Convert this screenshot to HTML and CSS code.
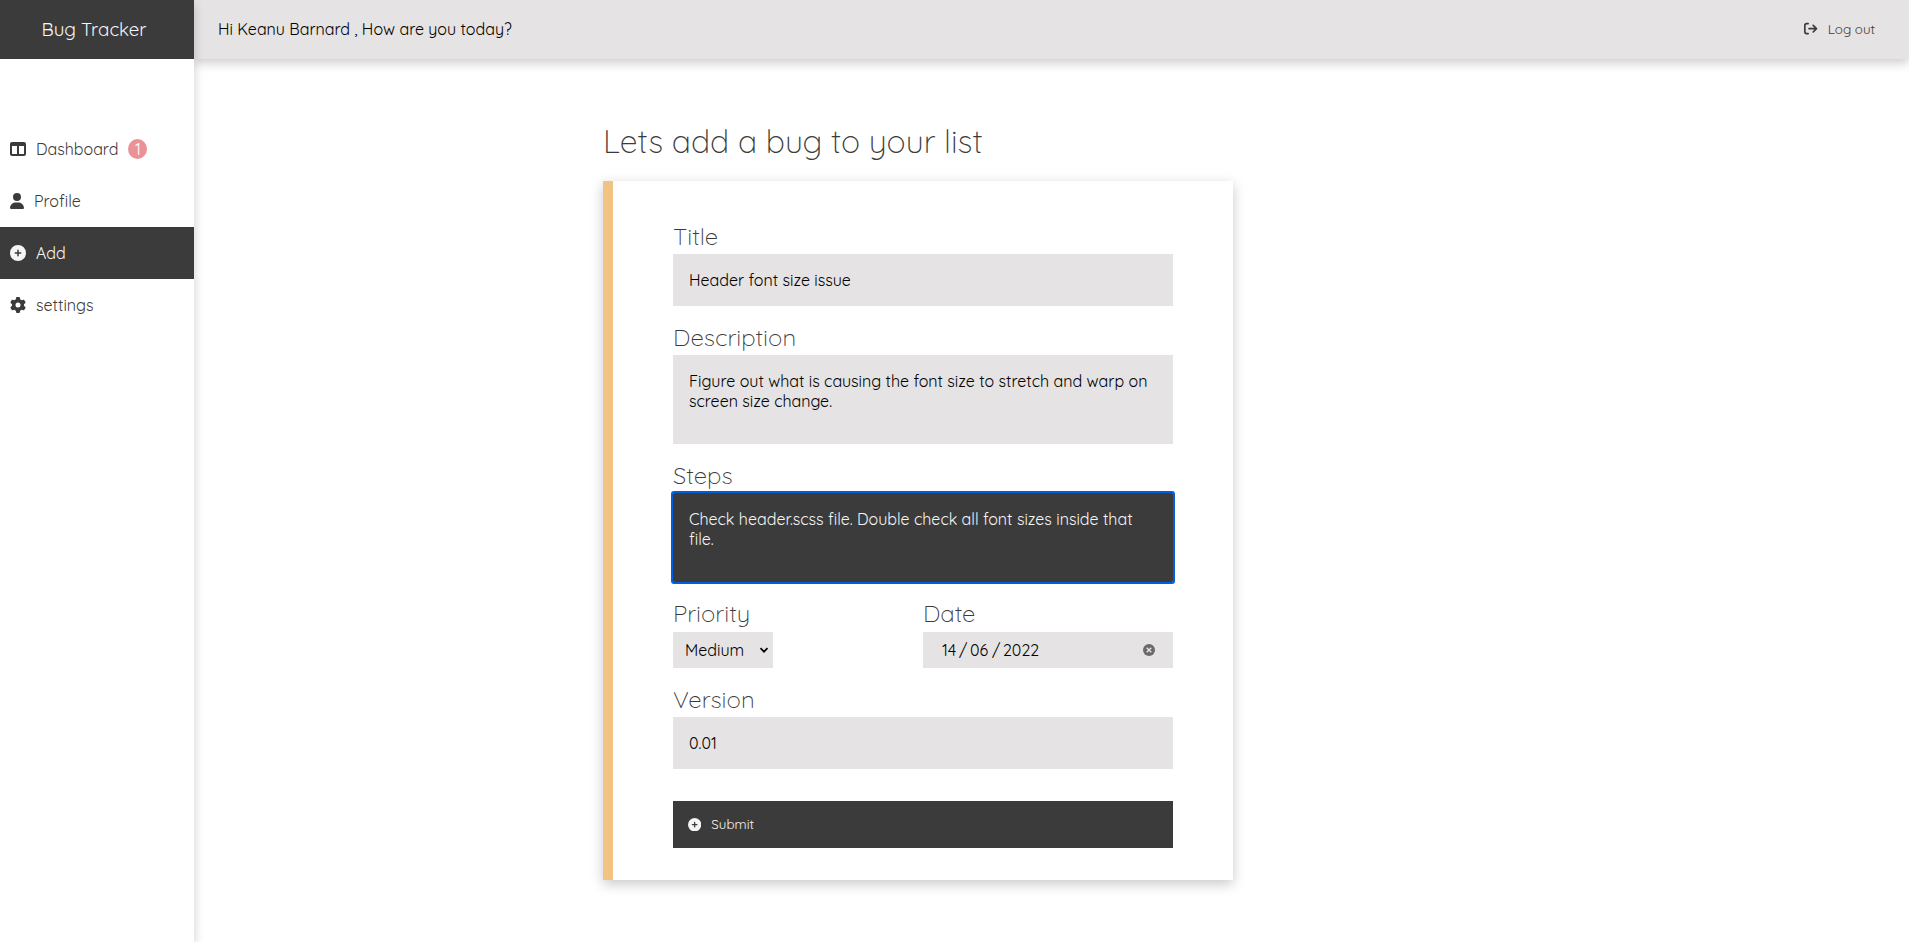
FILE: index.html
```html
<!DOCTYPE html>
<html lang="en">
<head>
<meta charset="utf-8">
<title>Bug Tracker</title>
<link rel="stylesheet" href="styles.css">
</head>
<body>
<div class="app">
  <aside class="sidebar">
    <div class="brand">Bug Tracker</div>
    <nav class="nav">
      <a class="nav-item">
        <svg class="icon" viewBox="0 0 512 512"><path d="M0 96C0 60.700 28.700 32 64 32H448c35.300 0 64 28.700 64 64V416c0 35.300-28.700 64-64 64H64c-35.300 0-64-28.700-64-64V96zm64 64V416H224V160H64zm384 0H288V416H448V160z"/></svg>
        <span>Dashboard</span><span class="badge">1</span>
      </a>
      <a class="nav-item">
        <svg class="icon icon-user" viewBox="0 0 448 512"><path d="M224 256A128 128 0 1 0 224 0a128 128 0 1 0 0 256zm-45.700 48C79.800 304 0 383.800 0 482.300C0 498.700 13.300 512 29.700 512H418.300c16.400 0 29.700-13.300 29.700-29.700C448 383.800 368.200 304 269.700 304H178.300z"/></svg>
        <span>Profile</span>
      </a>
      <a class="nav-item active">
        <svg class="icon" viewBox="0 0 512 512"><path d="M256 512A256 256 0 1 0 256 0a256 256 0 1 0 0 512zM232 344V280H168c-13.300 0-24-10.700-24-24s10.700-24 24-24h64V168c0-13.300 10.700-24 24-24s24 10.700 24 24v64h64c13.300 0 24 10.700 24 24s-10.700 24-24 24H280v64c0 13.300-10.700 24-24 24s-24-10.700-24-24z"/></svg>
        <span>Add</span>
      </a>
      <a class="nav-item">
        <svg class="icon" viewBox="0 0 512 512"><path d="M495.900 166.600c3.200 8.700 .5 18.400-6.400 24.600l-43.300 39.400c1.100 8.300 1.700 16.800 1.700 25.400s-.6 17.100-1.700 25.400l43.300 39.400c6.900 6.200 9.600 15.900 6.400 24.600c-4.400 11.900-9.700 23.300-15.800 34.300l-4.700 8.100c-6.600 11-14 21.400-22.100 31.200c-5.900 7.200-15.700 9.600-24.500 6.800l-55.700-17.700c-13.400 10.300-28.200 18.900-44 25.400l-12.500 57.100c-2 9.100-9 16.300-18.200 17.800c-13.800 2.300-28 3.500-42.500 3.500s-28.700-1.200-42.500-3.500c-9.200-1.500-16.200-8.700-18.200-17.800l-12.500-57.100c-15.800-6.500-30.600-15.100-44-25.400L83.100 425.900c-8.800 2.800-18.600 .3-24.500-6.800c-8.100-9.800-15.500-20.200-22.100-31.200l-4.700-8.100c-6.100-11-11.400-22.400-15.800-34.300c-3.200-8.700-.5-18.400 6.400-24.600l43.300-39.400C64.600 273.100 64 264.600 64 256s.6-17.100 1.700-25.400L22.400 191.200c-6.900-6.200-9.600-15.900-6.400-24.600c4.400-11.900 9.700-23.300 15.800-34.300l4.700-8.100c6.600-11 14-21.400 22.100-31.200c5.900-7.200 15.700-9.600 24.500-6.800l55.700 17.700c13.400-10.300 28.200-18.900 44-25.400l12.500-57.100c2-9.100 9-16.300 18.200-17.800C227.300 1.200 241.500 0 256 0s28.700 1.200 42.500 3.500c9.200 1.500 16.200 8.700 18.200 17.800l12.500 57.100c15.800 6.500 30.600 15.100 44 25.400l55.700-17.700c8.800-2.800 18.600-.3 24.500 6.800c8.100 9.800 15.500 20.200 22.100 31.200l4.700 8.100c6.100 11 11.400 22.400 15.800 34.300zM256 336a80 80 0 1 0 0-160 80 80 0 1 0 0 160z"/></svg>
        <span>settings</span>
      </a>
    </nav>
  </aside>
  <div class="page">
    <header class="topbar">
      <span>Hi Keanu Barnard , How are you today?</span>
      <a class="logout">
        <svg class="icon icon-small" viewBox="0 0 512 512"><path d="M502.600 278.600c12.500-12.500 12.500-32.800 0-45.300l-128-128c-12.500-12.500-32.800-12.500-45.300 0s-12.500 32.800 0 45.300L402.700 224 192 224c-17.700 0-32 14.300-32 32s14.300 32 32 32l210.700 0-73.400 73.400c-12.500 12.500-12.500 32.800 0 45.300s32.800 12.500 45.300 0l128-128zM160 96c17.700 0 32-14.300 32-32s-14.300-32-32-32L96 32C43 32 0 75 0 128L0 384c0 53 43 96 96 96l64 0c17.700 0 32-14.300 32-32s-14.300-32-32-32l-64 0c-17.700 0-32-14.300-32-32l0-256c0-17.700 14.300-32 32-32l64 0z"/></svg>
        <span>Log out</span>
      </a>
    </header>
    <main class="main">
      <h1 class="heading">Lets add a bug to your list</h1>
      <form class="card">
        <div class="label">Title</div>
        <div class="field">Header font size issue</div>
        <div class="label">Description</div>
        <div class="field area">Figure out what is causing the font size to stretch and warp on screen size change.</div>
        <div class="label">Steps</div>
        <div class="field area focused">Check header.scss file. Double check all font sizes inside that file.</div>
        <div class="row">
          <div class="col">
            <div class="label">Priority</div>
            <div class="select"><span>Medium</span>
              <svg class="chevron" viewBox="0 0 10 10"><path d="M1.500 3.200L5 6.700L8.500 3.200"/></svg>
            </div>
          </div>
          <div class="col">
            <div class="label">Date</div>
            <div class="date">
              <span class="day">14</span><span class="slash">/</span><span class="month">06</span><span class="slash">/</span><span>2022</span>
              <svg class="clear" viewBox="0 0 12 12"><circle cx="6" cy="6" r="6"/><path d="M3.700 3.700L8.300 8.300M8.300 3.700L3.700 8.300"/></svg>
            </div>
          </div>
        </div>
        <div class="label">Version</div>
        <div class="field">0.01</div>
        <div class="submit">
          <svg class="icon icon-small" viewBox="0 0 512 512"><path d="M256 512A256 256 0 1 0 256 0a256 256 0 1 0 0 512zM232 344V280H168c-13.300 0-24-10.700-24-24s10.700-24 24-24h64V168c0-13.300 10.700-24 24-24s24 10.700 24 24v64h64c13.300 0 24 10.700 24 24s-10.700 24-24 24H280v64c0 13.300-10.700 24-24 24s-24-10.700-24-24z"/></svg>
          <span>Submit</span>
        </div>
      </form>
    </main>
  </div>
</div>
</body>
</html>
```
FILE: styles.css
```css
* { box-sizing: border-box; }
body { margin: 0; font: 400 16px/20px Quicksand, Lato, sans-serif; color: #000; background: #fff; }
.app { display: flex; height: 942px; overflow: hidden; }

.sidebar { width: 194px; flex: none; background: #fff; position: relative; z-index: 2; box-shadow: 0 4px 10px rgba(0,0,0,.2); }
.brand { height: 59px; display: flex; align-items: center; justify-content: center; padding: 0 6px 1px 0; background: #3b3b3b; color: #f5f5f5; font-size: 18.72px; line-height: 24px; }
.nav { padding-top: 64px; }
.nav-item { height: 52px; padding-left: 10px; display: flex; align-items: center; gap: 10px; color: #3b3b3b; }
.nav-item.active { background: #3b3b3b; color: #f5f5f5; }
.icon { width: 16px; height: 16px; flex: none; fill: #3b3b3b; }
.icon-user { width: 14px; }
.icon-small { width: 13.33px; height: 13.33px; }
.active .icon, .submit .icon { fill: #f5f5f5; }
.badge { width: 19px; height: 20px; border-radius: 50%; background: #ea9296; color: #fff; text-align: center; }

.page { flex: 1; min-width: 0; }
.topbar { height: 59px; display: flex; align-items: center; justify-content: space-between; padding: 0 34px 1px 24px; background: #e5e3e3; box-shadow: 0 4px 10px rgba(0,0,0,.2); }
.logout { display: flex; align-items: center; gap: 10px; font-size: 13.333px; line-height: 16px; color: #3b3b3b; }

.main { padding: 62px 0 0 409px; }
.heading { margin: 0 0 20px; font-size: 32px; line-height: 40px; font-weight: 300; color: #3b3b3b; }
.card { width: 630px; padding: 40px 60px 32px; border-left: 10px solid #f2c483; background: #fff; box-shadow: 0 4px 12px rgba(0,0,0,.22); }
.label { height: 30px; margin-bottom: 3px; font-size: 24px; line-height: 30px; font-weight: 300; color: #3b3b3b; }
.field { height: 52px; margin-bottom: 16px; padding: 16px; background: #e5e3e3; }
.area { height: 89px; }
.focused { background: #3b3b3b; color: #f5f5f5; outline: 2px solid #005fe0; border-radius: 1px; }
.row { display: flex; margin-bottom: 16px; }
.row .label { margin-bottom: 4px; }
.col { width: 250px; }
.select, .date { height: 36px; display: flex; align-items: center; background: #e5e3e3; }
.select { width: 100px; padding: 0 4px 0 12px; justify-content: space-between; }
.chevron { width: 10px; height: 10px; fill: none; stroke: #000; stroke-width: 1.7; }
.date { padding: 0 18px 0 19px; }
.day { width: 17px; }
.slash { width: 11px; }
.month { width: 22px; }
.clear { width: 12px; height: 12px; margin-left: auto; fill: #6b6969; }
.clear path { stroke: #e5e3e3; stroke-width: 1.4; }
.submit { height: 47px; margin-top: 32px; padding: 0 15px; display: flex; align-items: center; gap: 10px; background: #3b3b3b; color: #f5f5f5; font-size: 13.333px; line-height: 17px; }
```
